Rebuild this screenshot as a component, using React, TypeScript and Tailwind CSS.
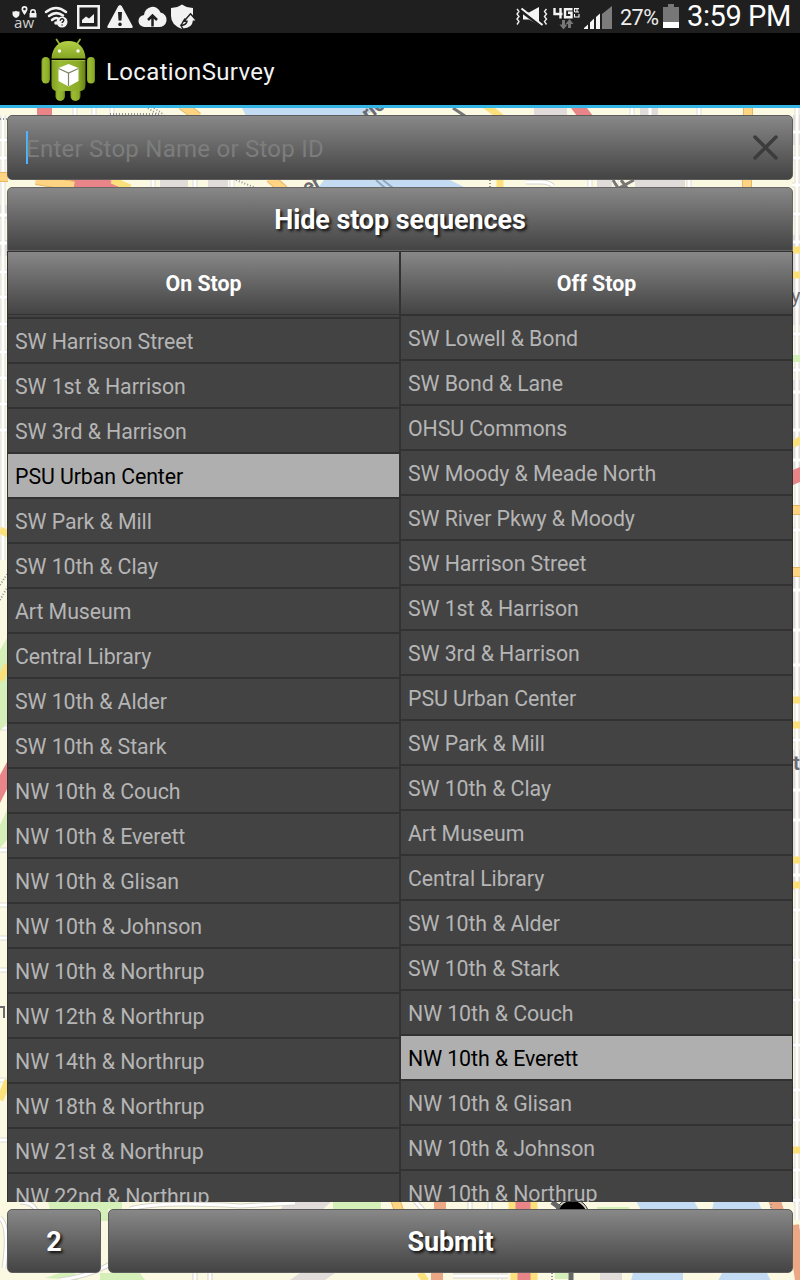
import React from "react";

const onStops = [
  "SW Harrison Street", "SW 1st & Harrison", "SW 3rd & Harrison", "PSU Urban Center", "SW Park & Mill",
  "SW 10th & Clay", "Art Museum", "Central Library", "SW 10th & Alder", "SW 10th & Stark",
  "NW 10th & Couch", "NW 10th & Everett", "NW 10th & Glisan", "NW 10th & Johnson", "NW 10th & Northrup",
  "NW 12th & Northrup", "NW 14th & Northrup", "NW 18th & Northrup", "NW 21st & Northrup", "NW 22nd & Northrup",
];
const offStops = [
  "SW Lowell & Bond", "SW Bond & Lane", "OHSU Commons", "SW Moody & Meade North", "SW River Pkwy & Moody",
  "SW Harrison Street", "SW 1st & Harrison", "SW 3rd & Harrison", "PSU Urban Center", "SW Park & Mill",
  "SW 10th & Clay", "Art Museum", "Central Library", "SW 10th & Alder", "SW 10th & Stark",
  "NW 10th & Couch", "NW 10th & Everett", "NW 10th & Glisan", "NW 10th & Johnson", "NW 10th & Northrup",
];

const gradient = "bg-linear-to-b from-[#888] to-[#444]";
const buttonText = "pt-[2px] text-[27px] tracking-[-0.100px] font-bold text-white [text-shadow:2px_2px_3px_rgba(0,0,0,0.85)]";

function StatusBar() {
  return (
    <header className="flex h-[33px] shrink-0 items-center bg-[#1f1f1f] text-white">
      <svg className="h-[33px] w-[210px] shrink-0" viewBox="0 0 210 33" fill="#f2f2f2">
        <path d="M12.500 11.500q3.500 0 3.500-1 0 1 3.500 1v2.500q0 2.500-3.500 4-3.500-1.500-3.500-4z" />
        <path fillRule="evenodd" d="M24.500 6a3 3 0 0 1 3 3q0 2-3 6-3-4-3-6a3 3 0 0 1 3-3zm0 1.700a1.300 1.300 0 1 0 .01 0z" />
        <path fillRule="evenodd" d="M30 13v-1a3 3 0 0 1 6 0v1h.5v4.500h-7V13zm1.500 0h3v-1a1.500 1.500 0 0 0-3 0z" />
        <text x="14" y="28" fontFamily="Open Sans, sans-serif" fontSize="15" textLength="20" fill="#d0d0d0">aw</text>
        <g fill="none" stroke="#f2f2f2" strokeWidth="2.500" strokeLinecap="round">
          <path d="M46 12Q56 4 66 12M49 16Q56 10.500 63 15.500M52 20Q55.500 17 58 18.500" />
        </g>
        <circle cx="56" cy="23" r="1.800" />
        <circle cx="62" cy="22" r="5.500" />
        <path d="M60.200 20.700c0-2.800 3.800-2.500 3.600-.2-.1 1.200-1.700 1-1.700 2.600M62.100 24.500v1" fill="none" stroke="#222" strokeWidth="1.400" />
        <path fillRule="evenodd" d="M77 5h23v24H77zm2.500 2.500v19h18v-19z" />
        <path d="M82 23v-3l4-3.500 3 2 5-4.500V23z" />
        <path fillRule="evenodd" d="M120 5q1.200 0 2 1.500l10.500 19.500q.8 2-1.500 2h-22q-2.300 0-1.500-2L118 6.500Q118.800 5 120 5zm-2 7 .5 8.500h3L122 12zm2 10.500a1.800 1.800 0 1 0 .01 0z" />
        <path d="M145 27a6 6 0 0 1-1-12 8.500 8.500 0 0 1 16.500-2.500A7.300 7.300 0 0 1 158 27z" />
        <path d="M152.500 26.500V17M148 20l4.500-4.500L157 20" fill="none" stroke="#1f1f1f" strokeWidth="2.500" />
        <path d="M171 8q7-.5 11-3.500 4 3 11 3.500v8q0 9-11 13-11-4-11-13z" />
        <path d="m190.500 13.800 6.500 7.400h-3.500q-.5 7.300-10.500 8l-2-3.700q5.500-.5 6-4.300h-3z" stroke="#1f1f1f" strokeWidth="1.500" />
        <path d="m185 18.500-4 7" stroke="#1f1f1f" strokeWidth="1.500" />
      </svg>
      <div className="flex-1" />
      <svg className="h-[33px] w-[104px] shrink-0" viewBox="510 0 104 33" fill="#f5f5f5">
        <g fill="none" stroke="#eee" strokeWidth="1.400">
          <path d="m517 9 2 2.500-2 2.500 2 2.500-2 2.500 2 2.500-2 3M546.500 9l-2 2.500 2 2.500-2 2.500 2 2.500-2 2.500 2 3" />
        </g>
        <path d="M523 12.500h6l10-5.500v18l-10-5.500h-6z" />
        <path d="m520.500 10.500 22 16.500" stroke="#1f1f1f" strokeWidth="3" />
        <path d="m521.500 8.500 21 16.500" stroke="#f5f5f5" strokeWidth="2" />
        <path d="M554.500 8v6h8M560.500 8v10.500M572.500 9.200H565v8.100h6.500v-4.500H568" fill="none" stroke="#f5f5f5" strokeWidth="2.400" />
        <path d="M574.500 8.600h4.500M574.500 12h4.500M574.500 8v4M577 8.600V12M574.500 14v3h4.500v-3" fill="none" stroke="#f5f5f5" strokeWidth="1.100" />
        <path d="m563.500 29.500-4-5h2.500V20h3v4.500h2.500zM569.500 19l4 5H571v4h-3v-4h-2.500z" fill="#777" />
        <path d="M584 29v-1l4-3.500V29zM590 29v-6.500l4-4V29zM596 29V17l4-3.500V29z" />
        <path d="M602 29V14l10-8v23z" fill="#7c7c7c" />
      </svg>
      <span className="ml-[6px] w-[39px] whitespace-nowrap pt-[3px] text-[21.500px] tracking-[-0.500px] text-[#eee]">27%</span>
      <svg className="ml-[4px] h-[33px] w-[16px] shrink-0" viewBox="0 0 16 33">
        <path d="M5 4h6v3h5v21H0V7h5z" fill="#777" />
        <path d="M0 22h16v6H0z" fill="#fff" />
      </svg>
      <span className="ml-[8px] w-[113px] shrink-0 whitespace-nowrap pt-px text-[29px] tracking-[-0.400px]">3:59 PM</span>
    </header>
  );
}

function AppIcon() {
  return (
    <svg className="ml-[40px] h-[64px] w-[56px]" viewBox="40 37 56 64">
      <defs>
        <linearGradient id="body" x1="0" x2="1">
          <stop offset="0" stopColor="#7f9f20" />
          <stop offset=".25" stopColor="#9cbc36" />
          <stop offset=".8" stopColor="#8cac28" />
          <stop offset="1" stopColor="#667f16" />
        </linearGradient>
        <linearGradient id="head" x1="0" y1="0" x2="0" y2="1">
          <stop offset="0" stopColor="#b4d045" />
          <stop offset="1" stopColor="#84a524" />
        </linearGradient>
      </defs>
      <path d="m56.500 39.500 4 6M80 39.500l-4 6" stroke="#93b337" strokeWidth="1.800" strokeLinecap="round" />
      <path d="M51.500 58.500C52 47 59 41 68.500 41S85 47 85.500 58.500z" fill="url(#head)" />
      <g fill="url(#body)">
        <rect x="41.500" y="57" width="8.500" height="26.500" rx="4.200" />
        <rect x="87" y="57" width="8" height="26.500" rx="4" />
        <rect x="55.500" y="84" width="9.500" height="17" rx="4.700" />
        <rect x="70.500" y="84" width="10" height="17" rx="5" />
        <path d="M51.500 60h34v25q0 6-6 6h-22q-6 0-6-6z" />
      </g>
      <path d="M52 60.500h33" stroke="#a9c746" strokeWidth=".8" />
      <circle cx="59.500" cy="51" r="1.700" fill="#fff" />
      <circle cx="78" cy="51" r="1.700" fill="#fff" />
      <path d="m68.500 64 10 4v13l-10 5.500-10-5.500V68z" fill="#fff" />
      <path d="m58.500 68.500 10 4.500 10-4.500M68.500 73v13" fill="none" stroke="#7c8468" strokeWidth="1.200" />
    </svg>
  );
}

const leftStreets = [215, 243, 272, 297, 324, 352, 378, 404, 430, 700, 728, 850, 905, 938, 970, 1080, 1140];
const rightStreets = [132, 158, 185, 214, 242, 276, 334, 370, 392, 430, 460, 530, 590, 630, 665, 700, 740, 790, 820, 875, 910, 960, 1000, 1045, 1090, 1120, 1170, 1200, 1228];

function MapBackdrop() {
  return (
    <svg className="absolute inset-0 h-full w-full" viewBox="0 108 800 1172">
      <rect y="108" width="800" height="1172" fill="#fbf9e2" />
      <g fill="#e1dbd9">
        <path d="M534 108h33v8h-33zM640 108h18v8h-18zM597 180h15v8h-15zM635 180h50v8h-50zM160 180h28v8h-28zM208 180h20v8h-20zM0 205h7v14H0zM0 240h7v16H0zM793 115h7v30h-7zM793 235h7v90h-7zM793 380h7v90h-7zM793 570h7v120h-7zM793 750h7v140h-7zM287 1201h45l-10 9h-42zM600 1272h22v8h-22zM300 1273h35l-10 7h-35z" />
      </g>
      <g stroke="#dfddd5" strokeWidth="5">
        {leftStreets.map((y) => <path key={y} d={`M0 ${y}h8`} />)}
        {rightStreets.map((y) => <path key={y} d={`M792 ${y}h8`} />)}
        <path d="M3 115V560M797 108V1220M75 108v8M94 108v8M112 108v8M153 180v8M195 180v8M232 180v8M632 108v8M650 108v8M699 108v8M590 180v8M616 180v8M689 180v8M0 140h8M0 158h8M490 1201v8M500 1273v8" />
      </g>
      <g stroke="#fff" strokeWidth="3">
        {leftStreets.map((y) => <path key={y} d={`M0 ${y}h8`} />)}
        {rightStreets.map((y) => <path key={y} d={`M792 ${y}h8`} />)}
        <path d="M3 115V560M797 108V1220M75 108v8M94 108v8M112 108v8M153 180v8M195 180v8M232 180v8M632 108v8M650 108v8M699 108v8M590 180v8M616 180v8M689 180v8M0 140h8M0 158h8M490 1201v8M500 1273v8" />
      </g>
      <path d="M242 108h140l-20 8H246zM324 180h126l16 8H318zM636 1201h58l5 9h-58zM714 1201h44l4 9h-50zM633 1273h50v8h-52zM722 1273h45l4 8h-53z" fill="#c4dcf3" />
      <path d="M0 650l7-12v85l-7 8zM0 825l7-15v30l-7 8zM793 355h7v7h-7zM48 1201h74v8H50zM333 1201h48v9h-48zM100 1201h8v20h-8zM597 1207h32v3h-32zM45 1278l15-5h15l3 7zM100 1273h40l5 7h-45zM555 1273h13v6h-13z" fill="#d5efb9" />
      <g fill="#e98588">
        <path d="M37 108h15v8H37zM571 108h16l6 8h-16zM70 180h40l20 8H73zM0 775l7-13v27l-7 14zM793 470l7-3v15l-7 3zM514 1201h18v9h-18zM517 1273h14v7h-14z" />
      </g>
      <g fill="none" stroke="#e8b765" strokeWidth="10">
        <path d="M182 105l16 12M270 178l14 12M0 177h8M36 180l38 6M395 1199l4 12M748 105v12M747 178v12M793 510h8M793 572h8" />
      </g>
      <g fill="none" stroke="#ffd584" strokeWidth="8">
        <path d="M182 105l16 12M270 178l14 12M0 177h8M36 180l38 6M395 1199l4 12M748 105v12M747 178v12M793 510h8M793 572h8" />
      </g>
      <g fill="none" stroke="#fbe07c" strokeWidth="7">
        <path d="M485 105l16 12M500 178v12M112 180l18 8M0 530l8 4M0 680l8-15M0 1100l8-20M793 250h8M793 275h8M793 445l8-6M793 700h8M793 725h8M793 860h8M793 885h8M793 1150h8M420 1273l6 8M512 1199v12M534 1199v12M514 1272v9M534 1272v9" />
      </g>
      <path d="M440 1199v12M437 1272v10M774 1199l4 12M793 1225l8 55" stroke="#eca784" strokeWidth="12" />
      <g fill="none" stroke="#92949a" strokeWidth="2" strokeDasharray="1 2">
        <path d="M110 114h50M148 108l12 8M154 108l10 7M0 119h8M236 180l20 8M490 180v8M0 600l8-14M0 585l8-12M552 1273v7M771 1201v9" />
      </g>
      <g fontFamily="Roboto, sans-serif" fontWeight="700" fontSize="20" fill="#6b6b70">
        <text transform="translate(368 121) rotate(-38)">ric</text>
        <text transform="translate(307 195) rotate(-30)">er</text>
        <text x="791" y="303" fontWeight="400">y</text>
        <text x="793" y="770">t</text>
      </g>
      <path d="M0 1007h4v11" fill="none" stroke="#6b6b70" strokeWidth="2" />
      <path d="M376 180l9 8M383 180l10 8" stroke="#91a6ba" strokeWidth="2" />
      <path d="M613 180l5 8M619 188l15-8M621 180l6 8M453 108l12 8" stroke="#777" strokeWidth="3" />
      <circle cx="572" cy="1216" r="17" fill="#d8d6c7" stroke="#333" />
      <path d="M557 1216a15 15 0 0 1 30 0z" fill="#000" />
      <path d="M552 1202l8 6M571 1272v8" stroke="#666" strokeWidth="5" />
      <g fill="none" strokeLinejoin="round">
        <path d="M0 1218q10 8 4 50M20 1202q12 0 16 8M130 1209q30-8 110-3l55-3M60 1280q30-4 50-16M195 1270v10M210 1270v10M453 1276h55M415 1201l8 9M470 1201v9M553 186q-4-4-12-4h-15" stroke="#d6d4cb" strokeWidth="5" />
        <path d="M0 1218q10 8 4 50M20 1202q12 0 16 8M130 1209q30-8 110-3l55-3M60 1280q30-4 50-16M195 1270v10M210 1270v10M453 1276h55M415 1201l8 9M470 1201v9M553 186q-4-4-12-4h-15" stroke="#fff" strokeWidth="3" />
      </g>
    </svg>
  );
}

function StopList({ stops, selected, offset }: { stops: string[]; selected: string; offset: boolean }) {
  return (
    <ul className={`min-h-0 flex-1 overflow-hidden bg-[#434343] ${offset ? "pt-[2px]" : ""}`}>
      <li className="h-[2px] bg-[#323232]" />
      {stops.map((stop) => (
        <li
          key={stop}
          className={`flex h-[45px] items-center whitespace-nowrap border-b-2 border-[#323232] pl-[7px] pt-[2px] text-[21.330px] tracking-[-0.080px] ${stop === selected ? "bg-[#afafaf] text-black" : "text-[#b5b5b5]"}`}
        >
          {stop}
        </li>
      ))}
    </ul>
  );
}

function Column({ title, stops, selected, offset = false }: { title: string; stops: string[]; selected: string; offset?: boolean }) {
  return (
    <section className="flex min-h-0 min-w-0 flex-1 flex-col">
      <h2 className={`flex h-[62px] shrink-0 items-center justify-center pt-[2px] text-[21.330px] font-bold text-white ${gradient}`}>{title}</h2>
      {offset && <div className="h-px shrink-0 bg-[#323232]" />}
      <StopList stops={stops} selected={selected} offset={offset} />
    </section>
  );
}

export default function App() {
  return (
    <div className="flex h-[1280px] w-[800px] flex-col overflow-hidden bg-black font-['Roboto',sans-serif]">
      <StatusBar />
      <div className="flex h-[75px] shrink-0 items-center border-b-[3px] border-[#33b5e5] bg-black">
        <AppIcon />
        <h1 className="ml-[10px] pt-[5px] text-[24px] tracking-[0.350px] text-[#f3f3f3]">LocationSurvey</h1>
      </div>
      <main className="relative min-h-0 flex-1">
        <MapBackdrop />
        <div className="relative flex h-full flex-col px-[7px] pb-[7px] pt-[7px]">
          <div className={`flex h-[65px] shrink-0 items-center rounded-[5px] border border-[#5c5c5c] pl-[18px] pr-[14px] ${gradient}`}>
            <div className="h-[33px] w-[2px] bg-[#4eb4ff]" />
            <span className="-ml-[2px] flex-1 whitespace-nowrap pt-[2px] text-[24px] tracking-[0.250px] text-[#7d7d7d]">Enter Stop Name or Stop ID</span>
            <svg className="h-[26px] w-[26px]" viewBox="0 0 26 26">
              <path d="m3 2 21 21M24 2 3 23" stroke="#3c3c3c" strokeWidth="3.500" strokeLinecap="round" />
            </svg>
          </div>
          <button className={`mt-[7px] h-[64px] shrink-0 rounded-t-[5px] border border-[#666] ${gradient} ${buttonText}`}>Hide stop sequences</button>
          <div className="flex min-h-0 flex-1 gap-[2px] border-x border-t border-[#323232] bg-[#323232]">
            <Column title="On Stop" stops={onStops} selected="PSU Urban Center" offset />
            <Column title="Off Stop" stops={offStops} selected="NW 10th & Everett" />
          </div>
          <div className="mt-[7px] flex h-[64px] shrink-0 gap-[7px]">
            <button className={`w-[94px] rounded-[5px] border border-[#5c5c5c] ${gradient} ${buttonText}`}>2</button>
            <button className={`flex-1 rounded-[5px] border border-[#5c5c5c] ${gradient} ${buttonText}`}>Submit</button>
          </div>
        </div>
      </main>
    </div>
  );
}
